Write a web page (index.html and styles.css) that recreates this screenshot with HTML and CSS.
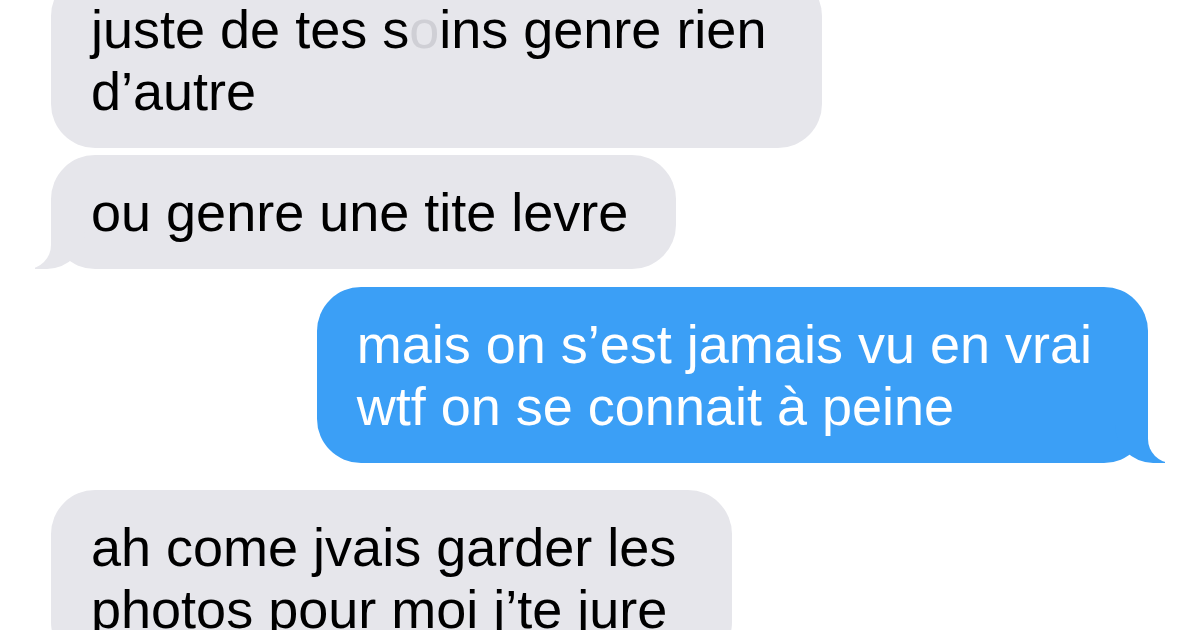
FILE: index.html
```html
<!DOCTYPE html>
<html lang="fr">

<head>
    <meta charset="UTF-8">
    <meta name="viewport" content="width=device-width, initial-scale=1.0">
    <title>Messages</title>
    <link rel="stylesheet" href="styles.css">
</head>

<body>
    <div class="thread">
        <p class="bubble them wide">juste de tes s<span class="blot">o</span>ins genre rien<br>d’autre</p>
        <p class="bubble them tail gap-s">ou genre une tite levre</p>
        <p class="bubble me tail wide gap-m">mais on s’est jamais vu en vrai<br>wtf on se connait à peine</p>
        <p class="bubble them wide gap-l">ah come jvais garder les<br>photos pour moi j’te jure</p>
    </div>
</body>

</html>
```

FILE: styles.css
```css
* {
    margin: 0;
    padding: 0;
}

html,
body {
    height: 100%;
}

body {
    overflow: hidden;
    background: #fff;
    font-family: "Liberation Sans", Arial, sans-serif;
}

.thread {
    display: flex;
    flex-direction: column;
    margin-top: -28px;
    padding: 0 52px 0 51px;
}

.bubble {
    position: relative;
    width: fit-content;
    padding: 26px 48px 26px 40px;
    border-radius: 44px;
    font-size: 54px;
    line-height: 62px;
}

/* bulles sur deux lignes : un peu plus de marge à droite */
.wide {
    padding-right: 56px;
}

.them {
    align-self: flex-start;
    background: #e6e6eb;
    color: #000;
}

.me {
    align-self: flex-end;
    background: #3b9ff6;
    color: #fff;
}

.gap-s {
    margin-top: 7px;
}

.gap-m {
    margin-top: 18px;
}

.gap-l {
    margin-top: 27px;
}

/* le petit o à moitié effacé */
.blot {
    color: #cfcfd5;
}

/* queue de la bulle */
.tail::before,
.tail::after {
    content: "";
    position: absolute;
    bottom: 0;
    height: 44px;
}

.them.tail::before {
    left: -16px;
    width: 50px;
    background: #e6e6eb;
    border-bottom-right-radius: 38px;
}

.them.tail::after {
    left: -26px;
    width: 26px;
    background: #fff;
    border-bottom-right-radius: 24px;
}

.me.tail::before {
    right: -17px;
    width: 50px;
    background: #3b9ff6;
    border-bottom-left-radius: 38px;
}

.me.tail::after {
    right: -27px;
    width: 27px;
    background: #fff;
    border-bottom-left-radius: 24px;
}
```
